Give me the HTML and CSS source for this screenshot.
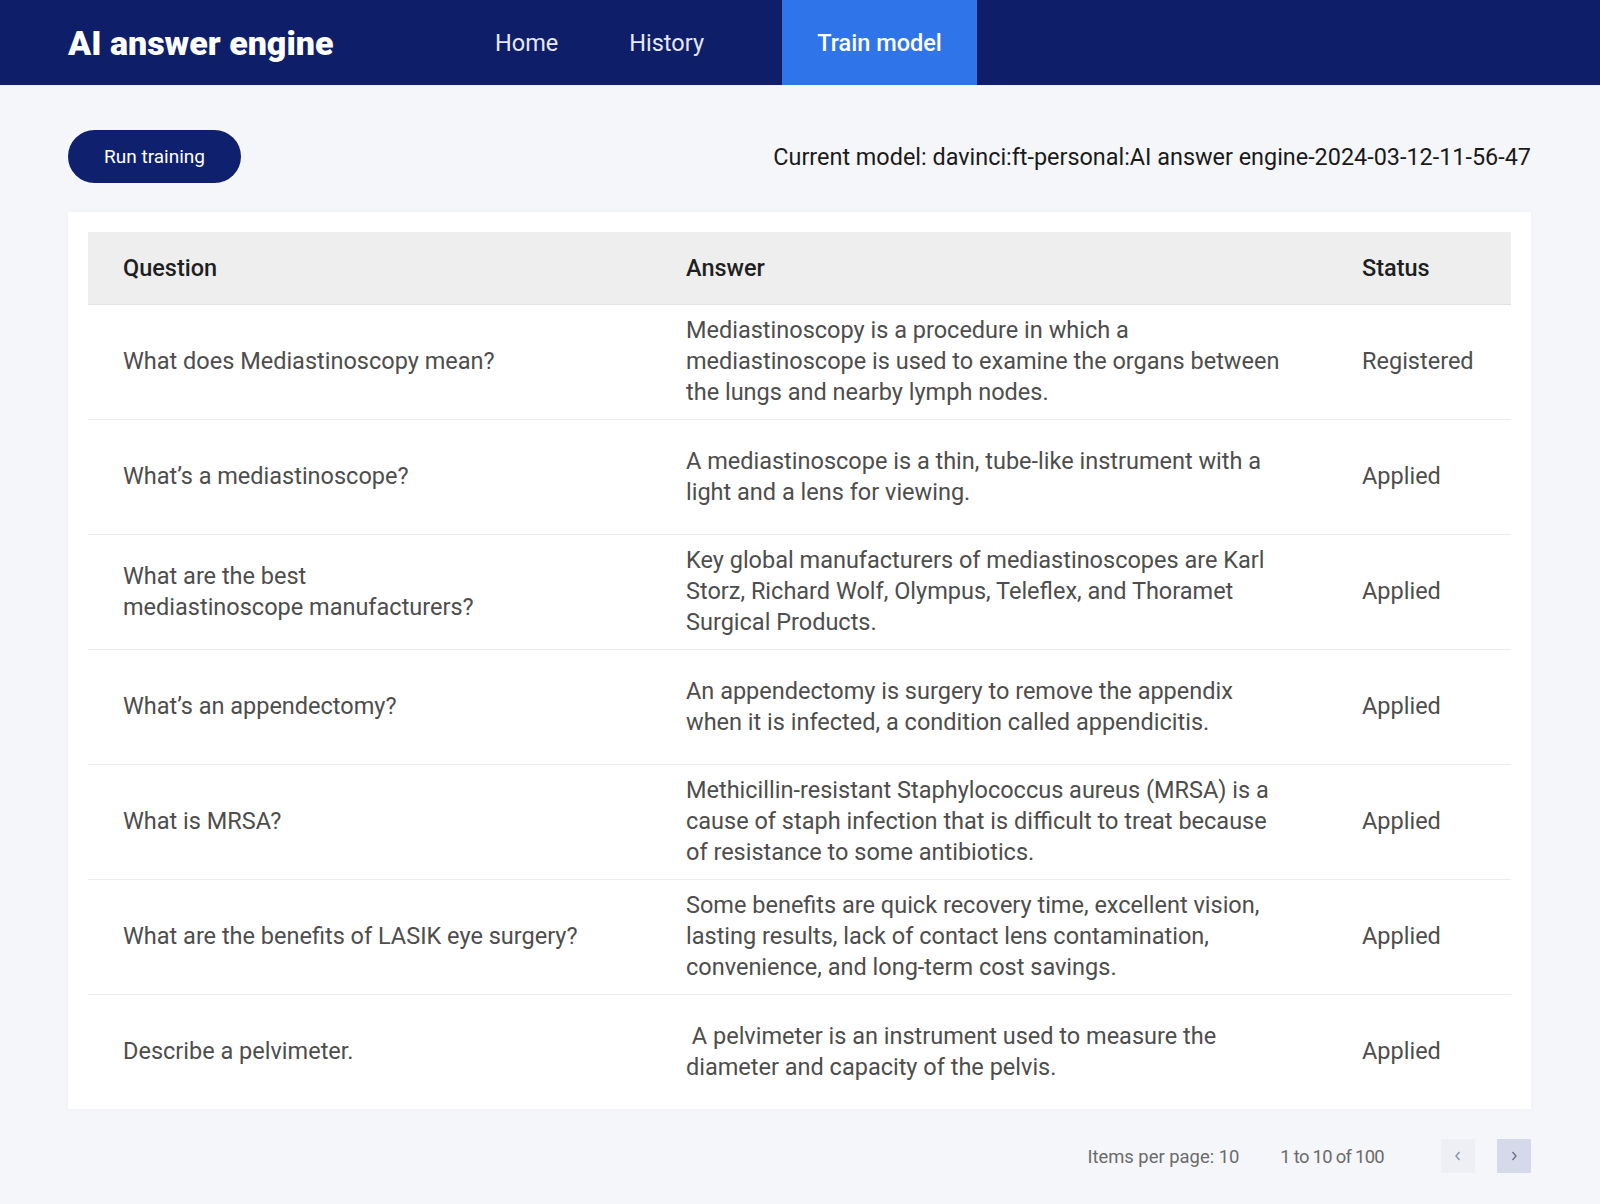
FILE: index.html
```html
<!DOCTYPE html>
<html lang="en">
<head>
<meta charset="utf-8">
<title>AI answer engine</title>
<link rel="stylesheet" href="styles.css">
</head>
<body>
<header class="topbar">
  <div class="logo">AI answer engine</div>
  <nav class="nav">
    <a class="nav-item">Home</a>
    <a class="nav-item">History</a>
    <a class="nav-item active">Train model</a>
  </nav>
</header>
<main class="main">
  <div class="toolbar">
    <button class="run-btn">Run training</button>
    <div class="current-model">Current model: davinci:ft-personal:AI answer engine-2024-03-12-11-56-47</div>
  </div>
  <section class="card">
    <table class="qa-table">
      <colgroup>
        <col class="col-q">
        <col class="col-a">
        <col class="col-s">
      </colgroup>
      <thead>
        <tr><th>Question</th><th>Answer</th><th>Status</th></tr>
      </thead>
      <tbody>
        <tr><td>What does Mediastinoscopy mean?</td><td>Mediastinoscopy is a procedure in which a mediastinoscope is used to examine the organs between the lungs and nearby lymph nodes.</td><td>Registered</td></tr>
        <tr><td>What’s a mediastinoscope?</td><td>A mediastinoscope is a thin, tube-like instrument with a light and a lens for viewing.</td><td>Applied</td></tr>
        <tr><td>What are the best<br>mediastinoscope manufacturers?</td><td>Key global manufacturers of mediastinoscopes are Karl Storz, Richard Wolf, Olympus, Teleflex, and Thoramet Surgical Products.</td><td>Applied</td></tr>
        <tr><td>What’s an appendectomy?</td><td>An appendectomy is surgery to remove the appendix when it is infected, a condition called appendicitis.</td><td>Applied</td></tr>
        <tr><td>What is MRSA?</td><td>Methicillin-resistant Staphylococcus aureus (MRSA) is a cause of staph infection that is difficult to treat because of resistance to some antibiotics.</td><td>Applied</td></tr>
        <tr><td>What are the benefits of LASIK eye surgery?</td><td>Some benefits are quick recovery time, excellent vision, lasting results, lack of contact lens contamination, convenience, and long-term cost savings.</td><td>Applied</td></tr>
        <tr><td>Describe a pelvimeter.</td><td>&nbsp;A pelvimeter is an instrument used to measure the diameter and capacity of the pelvis.</td><td>Applied</td></tr>
      </tbody>
    </table>
  </section>
  <div class="pager">
    <span class="pager-text">Items per page: 10</span>
    <span class="pager-text range">1 to 10 of 100</span>
    <div class="pager-btns">
      <button class="pg-btn prev" aria-label="Previous page">
        <svg width="10" height="12" viewBox="0 0 10 12"><path d="M6.5 2 L3 6 L6.5 10" fill="none" stroke="#8a90a8" stroke-width="1.4"/></svg>
      </button>
      <button class="pg-btn next" aria-label="Next page">
        <svg width="10" height="12" viewBox="0 0 10 12"><path d="M3.5 2 L7 6 L3.5 10" fill="none" stroke="#6a7090" stroke-width="1.4"/></svg>
      </button>
    </div>
  </div>
</main>
</body>
</html>
```
FILE: styles.css
```css
* { box-sizing: border-box; }
html, body { margin: 0; padding: 0; }
body {
  background: #f5f6fa;
  font-family: Roboto, "Liberation Sans", Arial, sans-serif;
  color: #222;
}
.topbar {
  height: 85px;
  background: #0f1e69;
  display: flex;
  align-items: stretch;
  padding-left: 68px;
}
.logo {
  color: #fff;
  font-size: 34px;
  font-weight: 900;
  display: flex;
  align-items: center;
  width: 269px;
  white-space: nowrap;
}
.nav {
  display: flex;
  align-items: stretch;
  margin-left: 125px;
}
.nav-item {
  display: flex;
  align-items: center;
  padding: 0 33px;
  color: #e6e9f5;
  font-size: 23.5px;
  cursor: pointer;
}
.nav-item + .nav-item { margin-left: 5px; }
.nav-item.active {
  background: #2f74e8;
  color: #fff;
  font-weight: 500;
  margin-left: 45px;
  width: 195px;
  padding: 0;
  justify-content: center;
}
.main {
  padding: 45px 69px 30px 68px;
}
.toolbar {
  display: flex;
  align-items: center;
  justify-content: space-between;
  height: 53px;
}
.run-btn {
  height: 53px;
  width: 173px;
  border: none;
  border-radius: 27px;
  background: #0f216e;
  color: #fff;
  font-family: inherit;
  font-size: 19px;
  cursor: pointer;
}
.current-model {
  font-size: 23.4px;
  color: #1a1a1a;
}
.card {
  margin-top: 29px;
  background: #fff;
  padding: 20px 20px 0 20px;
  box-shadow: 0 0 6px rgba(0, 0, 0, 0.03);
}
.qa-table {
  width: 100%;
  border-collapse: collapse;
  table-layout: fixed;
  font-size: 23.5px;
}
.col-q { width: 563px; }
.col-a { width: 676px; }
.col-s { width: auto; }
.qa-table th {
  background: #eeeeee;
  height: 72px;
  text-align: left;
  font-weight: 500;
  color: #1f1f1f;
  padding: 0 35px;
  border-bottom: 1px solid #e2e2e2;
}
.qa-table td {
  height: 115px;
  padding: 0 35px;
  vertical-align: middle;
  color: #4d4d4d;
  line-height: 31px;
  border-bottom: 1px solid #ececec;
}
.qa-table td:nth-child(2) { padding-right: 40px; }
.qa-table tbody tr:last-child td { border-bottom: none; }
.pager {
  display: flex;
  align-items: center;
  justify-content: flex-end;
  margin-top: 30px;
  height: 34px;
  font-size: 18.4px;
  color: #6b6b6b;
}
.pager-text.range { margin-left: 41px; letter-spacing: -0.7px; }
.pager-btns {
  display: flex;
  gap: 22px;
  margin-left: 57px;
}
.pg-btn {
  width: 34px;
  height: 34px;
  border: none;
  padding: 0;
  display: flex;
  align-items: center;
  justify-content: center;
  cursor: pointer;
}
.pg-btn.prev { background: #edeff5; }
.pg-btn.next { background: #d6d9ea; }
```
